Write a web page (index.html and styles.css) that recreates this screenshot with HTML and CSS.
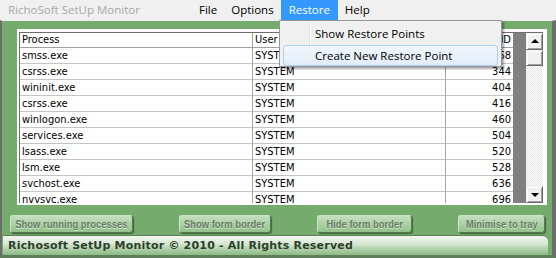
FILE: index.html
```html
<!DOCTYPE html>
<html lang="en">
<head>
  <meta charset="UTF-8" />
  <title>RichoSoft SetUp Monitor</title>
  <link rel="stylesheet" href="styles.css">
</head>
<body>
  <div class="window">
    <div class="menubar">
      <div class="title">RichoSoft SetUp Monitor</div>
      <ul class="menu">
        <li>File</li>
        <li>Options</li>
        <li class="open">Restore</li>
        <li>Help</li>
      </ul>
    </div>

    <div class="dropdown">
      <div class="item">Show Restore Points</div>
      <div class="item hot">Create New Restore Point</div>
    </div>

    <div class="client">
      <div class="listframe">
        <div class="listview">
          <div class="grid">
            <table class="procs">
              <thead>
                <tr><th>Process</th><th>User</th><th class="num">PID</th></tr>
              </thead>
              <tbody>
                <tr><td>smss.exe</td><td>SYSTEM</td><td class="num">268</td></tr>
                <tr><td>csrss.exe</td><td>SYSTEM</td><td class="num">344</td></tr>
                <tr><td>wininit.exe</td><td>SYSTEM</td><td class="num">404</td></tr>
                <tr><td>csrss.exe</td><td>SYSTEM</td><td class="num">416</td></tr>
                <tr><td>winlogon.exe</td><td>SYSTEM</td><td class="num">460</td></tr>
                <tr><td>services.exe</td><td>SYSTEM</td><td class="num">504</td></tr>
                <tr><td>lsass.exe</td><td>SYSTEM</td><td class="num">520</td></tr>
                <tr><td>lsm.exe</td><td>SYSTEM</td><td class="num">528</td></tr>
                <tr><td>svchost.exe</td><td>SYSTEM</td><td class="num">636</td></tr>
                <tr><td>nvvsvc.exe</td><td>SYSTEM</td><td class="num">696</td></tr>
              </tbody>
            </table>
          </div>
          <div class="gap"></div>
          <div class="scrollbar">
            <div class="sb-btn up"></div>
            <div class="sb-btn thumb"></div>
            <div class="sb-track"></div>
            <div class="sb-btn down"></div>
          </div>
        </div>
      </div>

      <div class="buttons">
        <button class="b1"><span>Show running processes</span></button>
        <button class="b2"><span>Show form border</span></button>
        <button class="b3"><span>Hide form border</span></button>
        <button class="b4"><span>Minimise to tray</span></button>
      </div>

      <div class="footer">Richosoft SetUp Monitor © 2010 - All Rights Reserved</div>
    </div>
  </div>
</body>
</html>
```

FILE: styles.css
```css
* {
  box-sizing: border-box;
}
body {
  margin: 0;
  background: #f0f0f0;
}
.window {
  position: relative;
  width: 556px;
  height: 258px;
  display: flex;
  flex-direction: column;
  overflow: hidden;
}

/* barra de menu */
.menubar {
  height: 20px;
  flex: none;
  display: flex;
  background: #f0f0f0;
  font-family: "Open Sans", sans-serif;
  font-size: 11.5px;
  line-height: 20px;
}
.title {
  width: 192px;
  padding-left: 8px;
  color: #a8a8a8;
}
.menu {
  list-style: none;
  margin: 0;
  padding: 0;
  display: flex;
}
.menu li {
  padding: 0 7px;
  color: #000;
}
.menu li.open {
  padding: 0 8px;
  background: #3399ff;
  color: #fff;
}

/* menu aberto */
.dropdown {
  position: absolute;
  left: 279px;
  top: 20px;
  width: 223px;
  height: 47px;
  padding: 2px 3px;
  border: 1px solid #979797;
  background-color: #f0f0f0;
  background-image: linear-gradient(to right, transparent 29px, #e2e3e3 29px, #e2e3e3 30px, #fff 30px, #fff 31px, transparent 31px);
  box-shadow: 2px 2px 2px rgba(0, 0, 0, 0.35);
  font-family: "Open Sans", sans-serif;
  font-size: 11.5px;
  z-index: 5;
}
.item {
  height: 21px;
  line-height: 19px;
  padding-left: 31px;
  border: 1px solid transparent;
  border-radius: 3px;
  color: #000;
}
.item + .item {
  margin-top: 1px;
}
.item.hot {
  border-color: #aecff7;
  background: linear-gradient(#f2f7fd, #e2ebf9);
}

/* area verde */
.client {
  flex: 1;
  display: flex;
  flex-direction: column;
  padding-top: 9px;
  background: #76ab6e;
  border-top: 1px solid #e9efe8;
  border-left: 2px solid #6d6d6d;
  border-right: 4px solid #6d6d6d;
  border-bottom: 3px solid #5e7f58;
}
.listframe {
  height: 176px;
  margin: -1px 5px 0 15px;
  padding: 3px 4px 2px 2px;
  background: #fff;
}
.listview {
  height: 100%;
  display: flex;
  border-top: 1px solid #6e6e6e;
  border-left: 1px solid #6e6e6e;
}
.grid {
  width: 493px;
  overflow: hidden;
  background: #fff;
}
.gap {
  width: 13px;
  background: #808080;
}

.procs {
  width: 493px;
  table-layout: fixed;
  border-collapse: separate;
  border-spacing: 0;
  font-family: "DejaVu Sans Condensed", "Liberation Sans", sans-serif;
  font-size: 11px;
  color: #000;
}
.procs th:nth-child(1) { width: 233px; }
.procs th:nth-child(2) { width: 193px; }
.procs th:nth-child(3) { width: 67px; }
.procs th,
.procs td {
  padding: 0 2px;
  white-space: nowrap;
  overflow: hidden;
  font-weight: normal;
  text-align: left;
}
.procs th {
  height: 15px;
  line-height: 14px;
  border-bottom: 1px solid #a0a0a0;
  border-right: 1px solid #a0a0a0;
}
.procs td {
  height: 16px;
  line-height: 15px;
  border-bottom: 1px solid #c4c4c4;
  border-right: 1px solid #a6a6a6;
}
.procs .num {
  text-align: right;
}
.procs td:last-child,
.procs th:last-child {
  border-right: none;
}

/* barra de rolagem */
.scrollbar {
  width: 17px;
  display: flex;
  flex-direction: column;
}
.sb-btn {
  position: relative;
  height: 17px;
  flex: none;
  background: #f0f0f0;
  border: 1px solid;
  border-color: #f0f0f0 #696969 #696969 #f0f0f0;
  box-shadow: inset 1px 1px 0 #fff, inset -1px -1px 0 #a0a0a0;
}
.sb-btn.thumb {
  height: 16px;
}
.sb-btn.up::after,
.sb-btn.down::after {
  content: "";
  position: absolute;
  left: 4px;
  top: 5px;
  border-left: 4px solid transparent;
  border-right: 4px solid transparent;
}
.sb-btn.up::after {
  border-bottom: 4px solid #000;
}
.sb-btn.down::after {
  top: 6px;
  border-top: 4px solid #000;
}
.sb-track {
  flex: 1;
  background-color: #fff;
  background-image: conic-gradient(#fff 25%, #e4e4e4 0 50%, #fff 0 75%, #e4e4e4 0);
  background-size: 2px 2px;
}

/* botoes */
.buttons {
  height: 18px;
  margin-top: 10px;
  padding: 0 7px 0 8px;
  display: flex;
  justify-content: space-between;
}
.buttons button {
  height: 18px;
  padding: 0;
  display: flex;
  justify-content: center;
  align-items: center;
  overflow: hidden;
  border: 1px solid;
  border-color: #cfe3cb #557a50 #557a50 #cfe3cb;
  border-radius: 3px;
  background: linear-gradient(#c4dfbe, #93c18b);
  box-shadow: 1px 1px 1px rgba(40, 70, 35, 0.7);
  font-family: "Liberation Sans", sans-serif;
  font-weight: bold;
  font-size: 11.5px;
  color: #697e66;
  text-shadow: 0 1px 0 #d4e6d0;
  white-space: nowrap;
}
.buttons button span {
  display: inline-block;
  transform: scaleX(0.82);
}
.b1 { width: 123px; }
.b2 { width: 92px; }
.b3 { width: 95px; }
.b4 { width: 87px; }

/* rodape */
.footer {
  height: 20px;
  margin: 2px 4px 0 1px;
  padding-left: 5px;
  border-top: 1px solid #5e7f58;
  border-top-right-radius: 6px;
  background: linear-gradient(#f2f7f0 0%, #d8e8d4 40%, #a9cca2 75%, #8fba88 100%);
  font-family: "DejaVu Sans", sans-serif;
  font-weight: bold;
  font-size: 11px;
  letter-spacing: 0.2px;
  line-height: 19px;
  color: #2d402b;
  white-space: nowrap;
}
```
